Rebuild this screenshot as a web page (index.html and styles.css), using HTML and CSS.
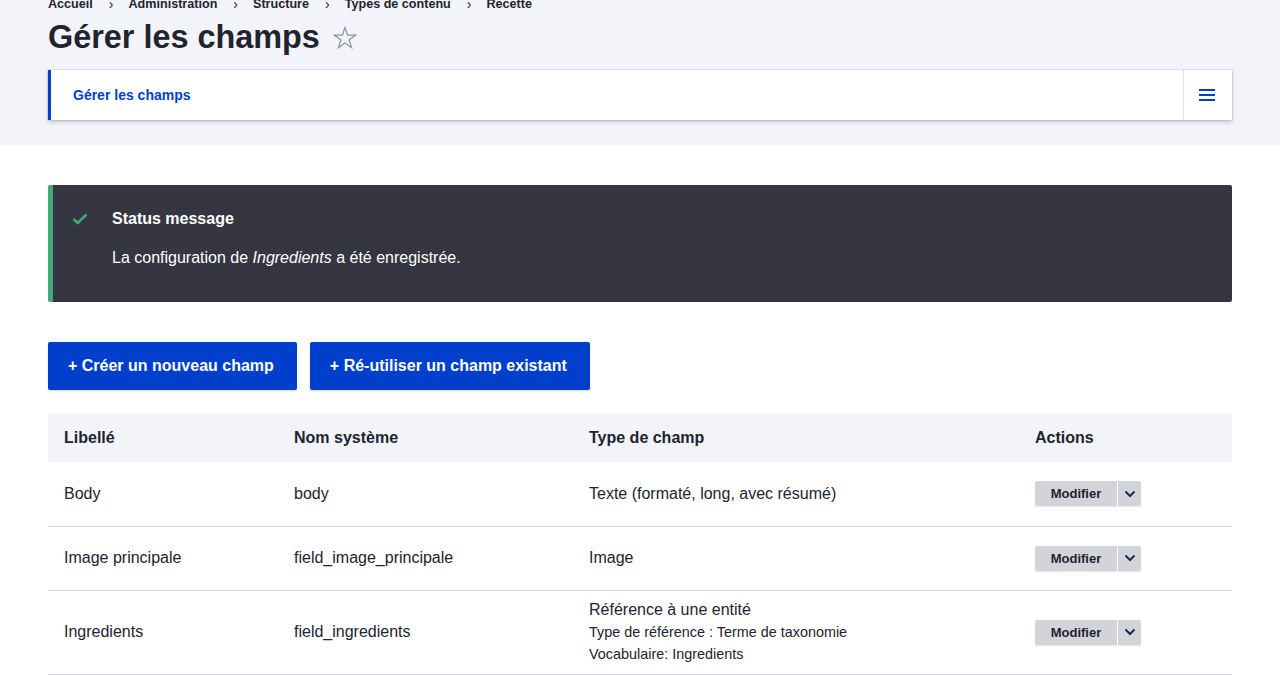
FILE: index.html
```html
<!DOCTYPE html>
<html lang="fr">
<head>
<meta charset="utf-8">
<title>Gérer les champs</title>
<link rel="stylesheet" href="styles.css">
</head>
<body>
<header class="region-header">
  <nav class="breadcrumb">
    <a href="#">Accueil</a><span class="sep">›</span>
    <a href="#">Administration</a><span class="sep">›</span>
    <a href="#">Structure</a><span class="sep">›</span>
    <a href="#">Types de contenu</a><span class="sep">›</span>
    <a href="#">Recette</a>
  </nav>
  <div class="title-row">
    <h1 class="page-title">Gérer les champs</h1>
    <svg class="star" width="24" height="24" viewBox="0 0 24 24"><polygon points="12,1.5 14.6,9.2 22.6,9.2 16.1,14 18.6,21.8 12,17 5.4,21.8 7.9,14 1.4,9.2 9.4,9.2" fill="none" stroke="#8e929c" stroke-width="1.2" stroke-linejoin="miter"/></svg>
  </div>
  <div class="tabs">
    <a class="tab-active" href="#">Gérer les champs</a>
    <button class="tabs-toggle" aria-label="Menu">
      <svg width="16" height="14" viewBox="0 0 16 14"><rect x="0" y="1" width="16" height="2" fill="#003ecc"/><rect x="0" y="6" width="16" height="2" fill="#003ecc"/><rect x="0" y="11" width="16" height="2" fill="#003ecc"/></svg>
    </button>
  </div>
</header>

<main class="content">
  <div class="message">
    <svg class="check" width="16" height="14" viewBox="0 0 16 14"><path d="M1.5 7 L5.8 11 L14.5 2.5" fill="none" stroke="#42a877" stroke-width="2.6"/></svg>
    <div class="message-body">
      <h2 class="message-title">Status message</h2>
      <p class="message-text">La configuration de <em>Ingredients</em> a été enregistrée.</p>
    </div>
  </div>

  <div class="actions">
    <a class="btn" href="#">+ Créer un nouveau champ</a>
    <a class="btn" href="#">+ Ré-utiliser un champ existant</a>
  </div>

  <table class="fields">
    <colgroup>
      <col class="c1"><col class="c2"><col class="c3"><col class="c4">
    </colgroup>
    <thead>
      <tr><th>Libellé</th><th>Nom système</th><th>Type de champ</th><th>Actions</th></tr>
    </thead>
    <tbody>
      <tr>
        <td>Body</td><td>body</td><td>Texte (formaté, long, avec résumé)</td>
        <td><div class="dropbutton"><span class="db-main">Modifier</span><span class="db-toggle"><svg width="12" height="8" viewBox="0 0 12 8"><path d="M1.5 1.5 L6 6 L10.5 1.5" fill="none" stroke="#1f2a4d" stroke-width="2"/></svg></span></div></td>
      </tr>
      <tr>
        <td>Image principale</td><td>field_image_principale</td><td>Image</td>
        <td><div class="dropbutton"><span class="db-main">Modifier</span><span class="db-toggle"><svg width="12" height="8" viewBox="0 0 12 8"><path d="M1.5 1.5 L6 6 L10.5 1.5" fill="none" stroke="#1f2a4d" stroke-width="2"/></svg></span></div></td>
      </tr>
      <tr>
        <td>Ingredients</td><td>field_ingredients</td>
        <td class="type-cell"><div class="type-main">Référence à une entité</div><div class="type-sub">Type de référence : Terme de taxonomie</div><div class="type-sub">Vocabulaire: Ingredients</div></td>
        <td><div class="dropbutton"><span class="db-main">Modifier</span><span class="db-toggle"><svg width="12" height="8" viewBox="0 0 12 8"><path d="M1.5 1.5 L6 6 L10.5 1.5" fill="none" stroke="#1f2a4d" stroke-width="2"/></svg></span></div></td>
      </tr>
    </tbody>
  </table>
</main>
</body>
</html>
```

FILE: styles.css
```css
* { box-sizing: border-box; }
html, body { margin: 0; padding: 0; }
body {
  font-family: "Liberation Sans", Arial, sans-serif;
  color: #222330;
  background: #fff;
  font-size: 16px;
}
a { text-decoration: none; }

.region-header {
  background: #f3f4f9;
  padding: 0 48px 25px;
}
.breadcrumb {
  margin-top: -6px;
  height: 20px;
  line-height: 20px;
  font-size: 12.6px;
  font-weight: bold;
  display: flex;
  align-items: center;
}
.breadcrumb a { color: #222330; }
.breadcrumb .sep {
  font-weight: normal;
  padding: 0 15px 0 16px;
  font-size: 14px;
}
.title-row {
  display: flex;
  align-items: center;
  margin-top: 3px;
  height: 40px;
}
.page-title {
  margin: 0;
  font-size: 32.4px;
  line-height: 40px;
  font-weight: bold;
}
.star { margin-left: 13px; margin-top: 2px; }

.tabs {
  margin-top: 13px;
  height: 50px;
  background: #fff;
  border-left: 3px solid #003ecc;
  box-shadow: 0 2px 4px rgba(0,0,0,0.2), 0 0 0 1px rgba(0,0,0,0.06);
  display: flex;
  align-items: stretch;
}
.tab-active {
  flex: 1;
  display: flex;
  align-items: center;
  padding-left: 22px;
  color: #003ecc;
  font-weight: bold;
  font-size: 14px;
}
.tabs-toggle {
  width: 49px;
  border: 0;
  border-left: 1px solid #dedfe4;
  background: #fff;
  display: flex;
  align-items: center;
  justify-content: center;
  padding: 0 2px 0 0;
}

.content { padding: 40px 48px 0; }

.message {
  background: #353641;
  border-left: 5px solid #42a877;
  color: #fff;
  display: flex;
  padding: 22px 24px 32px 19px;
  border-radius: 2px;
}
.check { margin-top: 5px; flex: none; }
.message-body { margin-left: 24px; }
.message-title {
  margin: 0;
  font-size: 16px;
  line-height: 24px;
  font-weight: bold;
}
.message-text {
  margin: 15px 0 0;
  font-size: 16px;
  line-height: 24px;
}

.actions {
  margin-top: 40px;
  display: flex;
  gap: 13px;
}
.btn {
  background: #003ecc;
  color: #fff;
  font-weight: bold;
  font-size: 16px;
  height: 48px;
  line-height: 48px;
  padding: 0 23px 0 20px;
  border-radius: 2px;
  box-shadow: 0 1px 2px rgba(0,0,0,0.15);
}

.fields {
  margin-top: 24px;
  width: 100%;
  border-collapse: collapse;
  table-layout: fixed;
}
.c1 { width: 230px; }
.c2 { width: 295px; }
.c3 { width: 446px; }
.c4 { width: 213px; }
.fields th {
  background: #f3f4f9;
  text-align: left;
  font-weight: bold;
  height: 48px;
  padding: 0 16px;
  font-size: 16px;
}
.fields td {
  height: 64px;
  padding: 8px 16px;
  border-bottom: 1px solid #d3d4d9;
  vertical-align: middle;
  line-height: 24px;
}
.fields td.type-cell { padding-top: 7px; padding-bottom: 9px; }
.type-main { line-height: 24px; }
.type-sub { font-size: 14.4px; line-height: 22px; margin-top: -1px; }
.type-sub + .type-sub { margin-top: 0; }

.dropbutton {
  display: inline-flex;
  height: 25px;
  background: #d3d4d9;
  border-radius: 2px;
  box-shadow: 0 1px 2px rgba(0,0,0,0.1);
}
.db-main {
  width: 82px;
  text-align: center;
  font-size: 13px;
  font-weight: bold;
  line-height: 25px;
  color: #222330;
}
.db-toggle {
  width: 24px;
  border-left: 1px solid #fff;
  display: flex;
  align-items: center;
  justify-content: center;
}
```
